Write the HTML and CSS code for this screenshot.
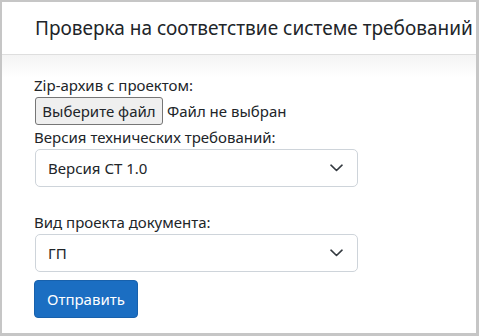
FILE: index.html
```html
<!DOCTYPE html>
<html lang="ru">
<head>
<meta charset="utf-8">
<link rel="stylesheet" href="styles.css">
</head>
<body>
<div class="frame">
  <header class="top-row">
    <h1 class="title">Проверка на соответствие системе требований</h1>
  </header>
  <main class="content">
    <label class="label">Zip-архив с проектом:</label>
    <div class="file-row">
      <span class="file-btn">Выберите файл</span>
      <span class="file-name">Файл не выбран</span>
    </div>
    <label class="label">Версия технических требований:</label>
    <div class="select">
      <span>Версия СТ 1.0</span>
      <svg class="chev" width="13" height="8" viewBox="0 0 13 8"><path d="M1 1.2l5.5 5.3 5.5-5.3" fill="none" stroke="#343a40" stroke-width="1.6" stroke-linecap="round" stroke-linejoin="round"/></svg>
    </div>
    <label class="label label-gap">Вид проекта документа:</label>
    <div class="select">
      <span>ГП</span>
      <svg class="chev" width="13" height="8" viewBox="0 0 13 8"><path d="M1 1.2l5.5 5.3 5.5-5.3" fill="none" stroke="#343a40" stroke-width="1.6" stroke-linecap="round" stroke-linejoin="round"/></svg>
    </div>
    <button class="btn" type="button">Отправить</button>
  </main>
</div>
</body>
</html>
```

FILE: styles.css
```css
html, body {
  margin: 0;
  padding: 0;
}
body {
  width: 479px;
  height: 336px;
  background: #c6c6c6;
  font-family: "Noto Sans", "Open Sans", sans-serif;
  color: #212529;
  overflow: hidden;
}
.frame {
  box-sizing: border-box;
  width: 479px;
  height: 336px;
  border-style: solid;
  border-color: #c6c6c6;
  border-width: 2px 3px 3px 2px;
  background: #fff;
  display: flex;
  flex-direction: column;
}
.top-row {
  height: 52px;
  border-bottom: 1px solid #dedede;
  display: flex;
  align-items: center;
  padding-left: 33px;
  flex-shrink: 0;
}
.title {
  margin: 0;
  font-size: 19px;
  font-weight: 400;
  color: #212529;
  white-space: nowrap;
}
.content {
  flex: 1;
  background: linear-gradient(#f4f4f4, #ffffff 22px);
  padding: 18px 0 0 32px;
  display: flex;
  flex-direction: column;
  align-items: flex-start;
  font-size: 15px;
}
.label {
  display: block;
  line-height: 24px;
  height: 24px;
}
.label-gap {
  margin-top: 23px;
}
.file-row {
  display: flex;
  align-items: center;
  gap: 4px;
}
.file-btn {
  box-sizing: border-box;
  height: 28px;
  width: 128px;
  margin-left: 1px;
  border: 1px solid #767676;
  border-radius: 3px;
  background: #efefef;
  display: flex;
  align-items: center;
  justify-content: center;
}
.select {
  box-sizing: border-box;
  width: 323px;
  height: 38px;
  margin-left: 1px;
  border: 1px solid #ced4da;
  border-radius: 5px;
  display: flex;
  align-items: center;
  justify-content: space-between;
  padding: 0 14px 0 12px;
}
.chev {
  display: block;
}
.btn {
  margin-top: 8px;
  box-sizing: border-box;
  height: 38px;
  padding: 0 12px;
  border: 1px solid #1861ac;
  border-radius: 4px;
  background: #1b6ec2;
  color: #fff;
  font-family: inherit;
  font-size: 15px;
}
```
